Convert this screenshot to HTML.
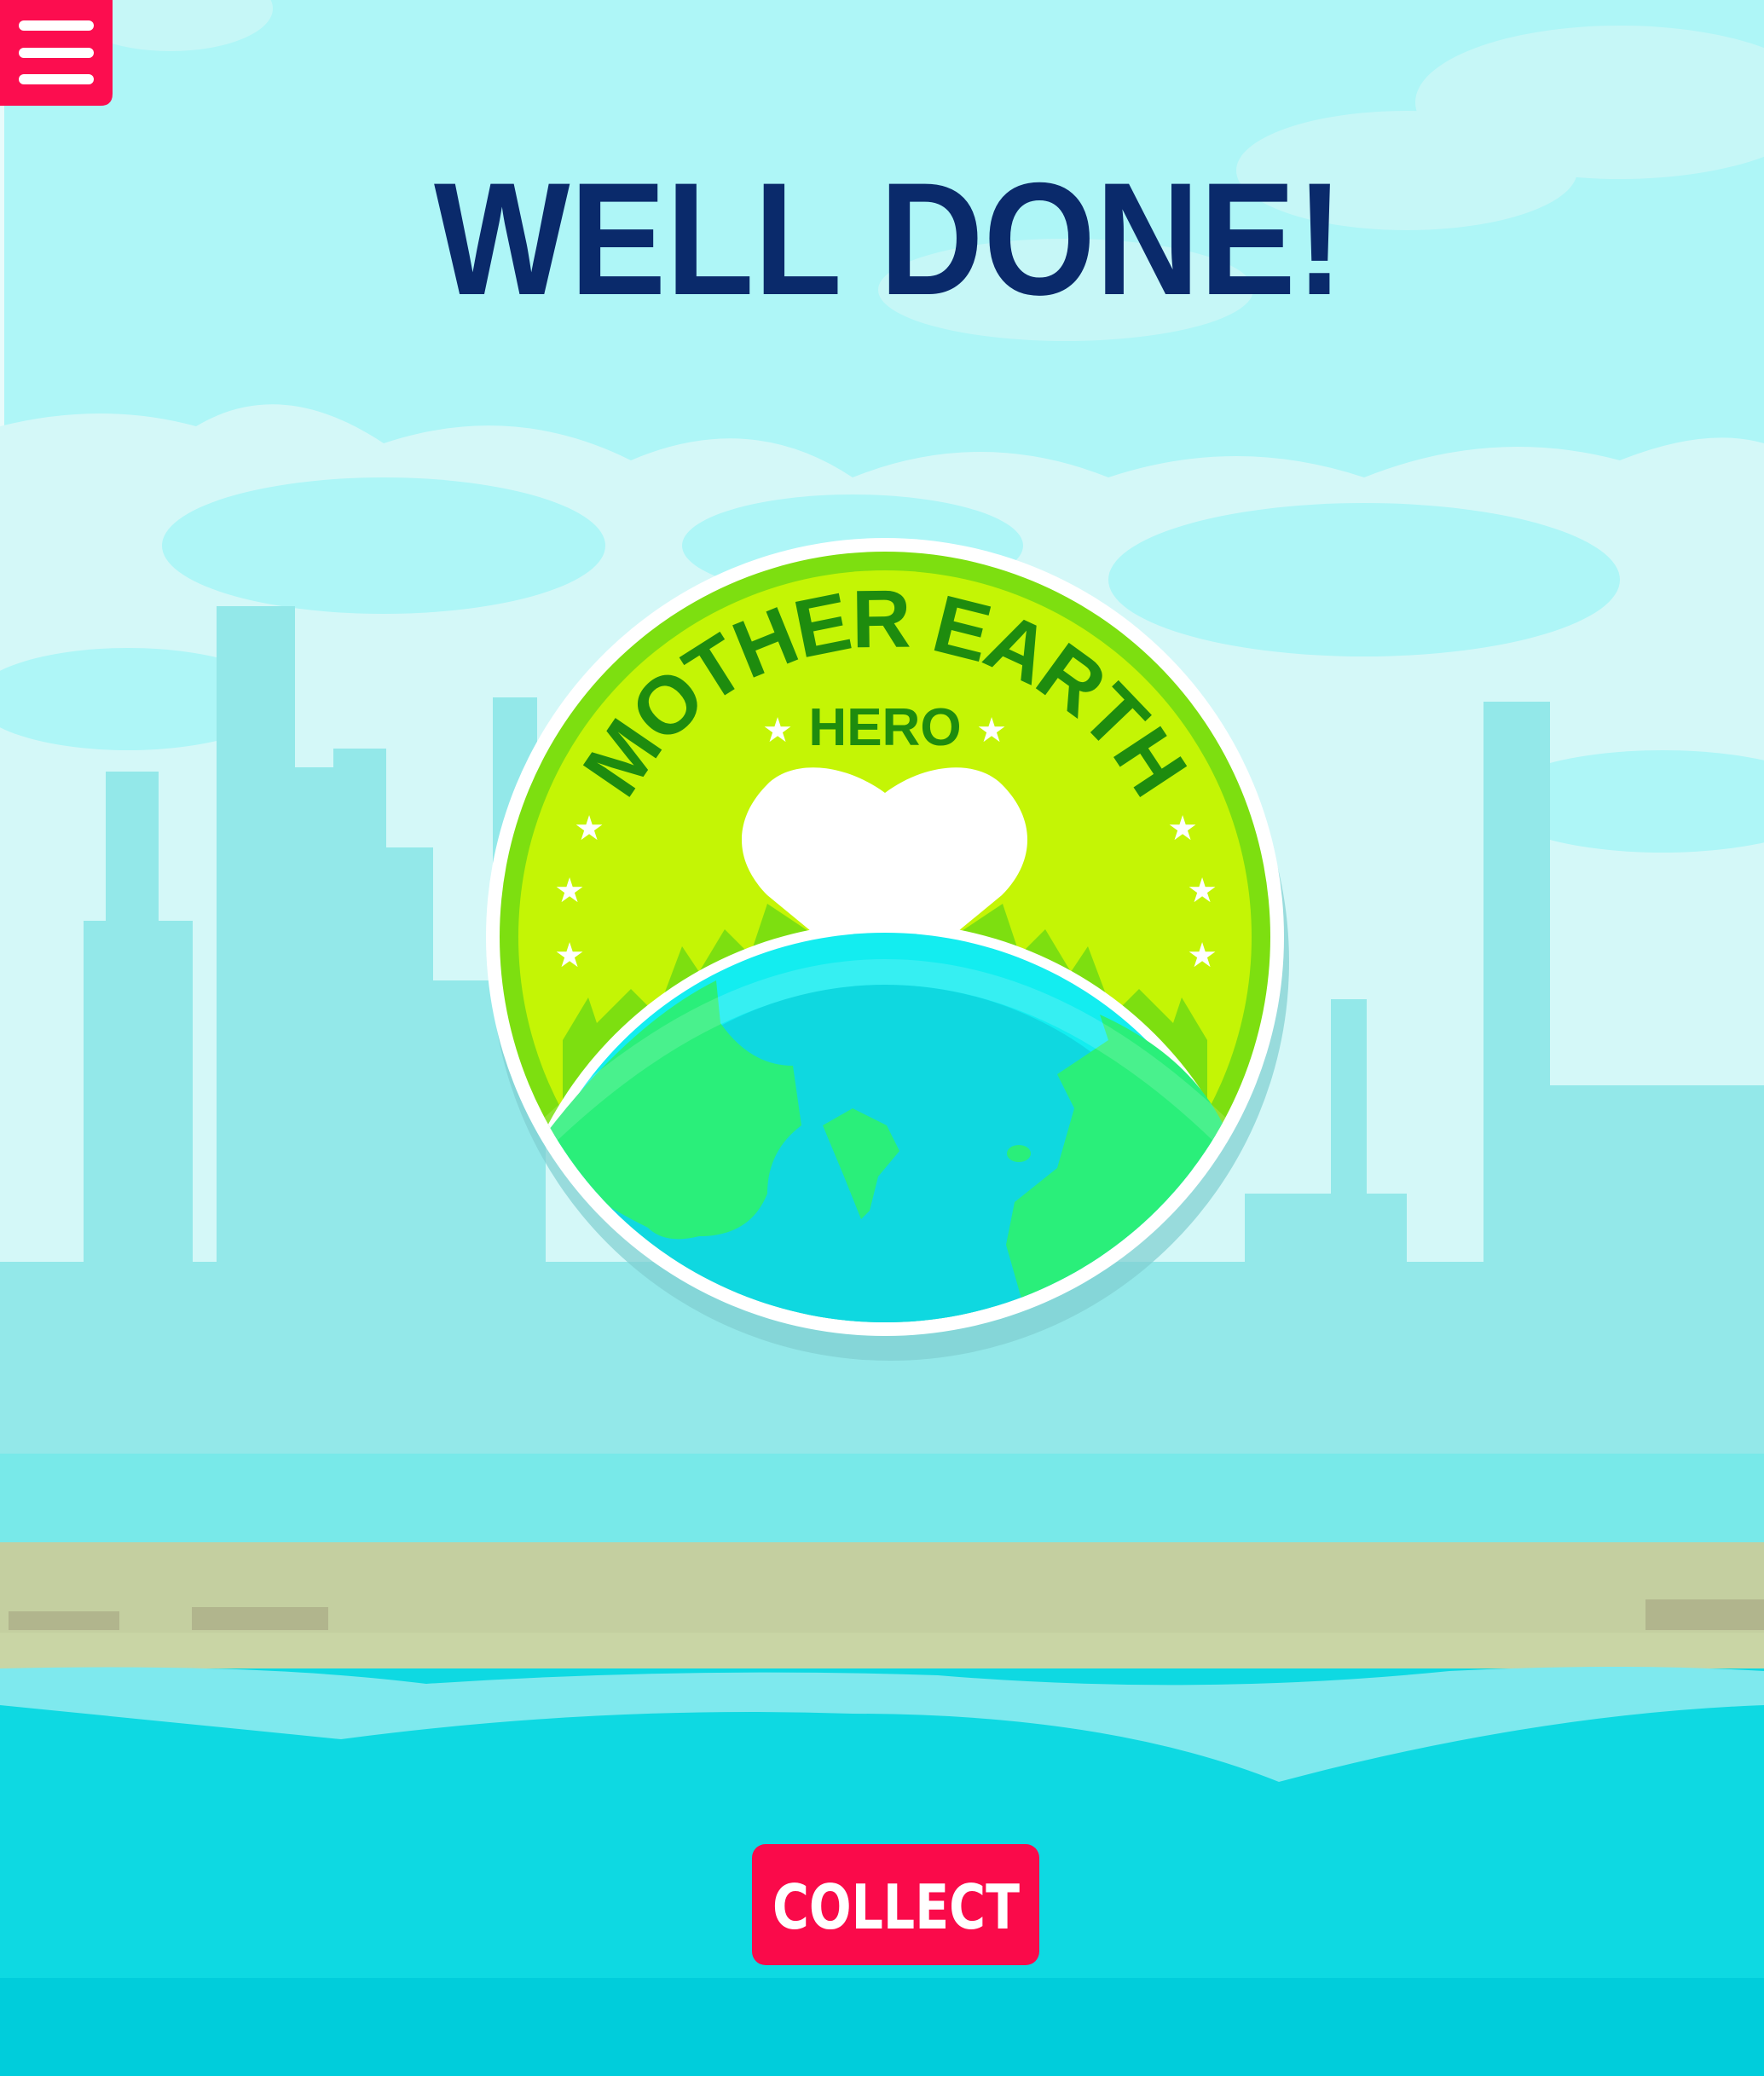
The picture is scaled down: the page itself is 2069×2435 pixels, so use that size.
<!DOCTYPE html>
<html><head><meta charset="utf-8"><style>
html,body{margin:0;padding:0;width:2069px;height:2435px;overflow:hidden;background:#aef6f7}
svg{display:block}
</style></head><body>
<svg width="2069" height="2435" viewBox="0 0 2069 2435" xmlns="http://www.w3.org/2000/svg">
<defs>
<clipPath id="badge"><circle cx="1038" cy="1099" r="425"/></clipPath>
<clipPath id="badge2"><circle cx="1038" cy="1099" r="452"/></clipPath>
<path id="arc" d="M 698 1099 A 340 340 0 0 1 1378 1099" fill="none"/>
</defs>
<rect width="2069" height="2435" fill="#aef6f7"/>
<rect x="0" y="0" width="5" height="2435" fill="#e8fbfb"/>
<g fill="#c6f7f7">
<ellipse cx="200" cy="10" rx="120" ry="50"/>
<ellipse cx="1900" cy="120" rx="240" ry="90"/>
<ellipse cx="1650" cy="200" rx="200" ry="70"/>
<ellipse cx="1250" cy="340" rx="220" ry="60"/>
</g>
<path d="M0 500 Q120 470 230 500 Q330 440 450 520 Q600 470 740 540 Q880 480 1000 560 Q1150 500 1300 560 Q1450 510 1600 560 Q1750 500 1900 540 Q2000 500 2069 520 L2069 1500 L0 1500 Z" fill="#d4f8f8"/>
<g fill="#aef6f7">
<ellipse cx="450" cy="640" rx="260" ry="80"/>
<ellipse cx="1600" cy="680" rx="300" ry="90"/>
<ellipse cx="1000" cy="640" rx="200" ry="60"/>
<ellipse cx="150" cy="820" rx="180" ry="60"/>
<ellipse cx="1950" cy="940" rx="200" ry="60"/>
</g>
<g fill="#93e8e9">
<rect x="254" y="711" width="92" height="1000"/>
<rect x="124" y="905" width="62" height="1000"/>
<rect x="98" y="1080" width="30" height="700"/>
<rect x="186" y="1080" width="40" height="700"/>
<rect x="346" y="900" width="45" height="900"/>
<rect x="391" y="878" width="62" height="900"/>
<rect x="453" y="994" width="55" height="900"/>
<rect x="578" y="818" width="52" height="900"/>
<rect x="0" y="1480" width="2069" height="300"/>
<rect x="1740" y="823" width="78" height="900"/>
<rect x="1818" y="1273" width="251" height="500"/>
<rect x="1561" y="1172" width="42" height="600"/>
<rect x="1460" y="1400" width="190" height="400"/>
<rect x="500" y="1150" width="140" height="650"/>
</g>
<rect x="0" y="1705" width="2069" height="105" fill="#78e9e9"/>
<rect x="0" y="1809" width="2069" height="150" fill="#c4cfa0"/>
<rect x="0" y="1915" width="2069" height="45" fill="#c9d5a5"/>
<g fill="#b1b58d"><rect x="10" y="1890" width="130" height="22"/><rect x="225" y="1885" width="160" height="27"/><rect x="1930" y="1876" width="139" height="36"/></g>
<rect x="0" y="1957" width="2069" height="478" fill="#0ed9e2"/>
<path d="M0 1957 Q300 1950 500 1975 Q800 1955 1100 1965 Q1400 1990 1700 1960 Q1900 1950 2069 1960 L2069 2000 Q1800 2010 1500 2090 Q1300 2010 1000 2010 Q700 2000 400 2040 Q200 2020 0 2000 Z" fill="#7ee9ee"/>
<rect x="0" y="2320" width="2069" height="115" fill="#00cddb"/>
<circle cx="1044" cy="1128" r="468" fill="#7fcfd0" opacity="0.7"/>
<circle cx="1038" cy="1099" r="468" fill="#ffffff"/>
<circle cx="1038" cy="1099" r="452" fill="#7ddf10"/>
<circle cx="1038" cy="1099" r="430" fill="#c4f505"/>
<g fill="#7ddf10" clip-path="url(#badge)">
<path d="M660 1220 L690 1170 L700 1200 L740 1160 L770 1190 L800 1110 L820 1140 L850 1090 L880 1120 L900 1060 L960 1100 L1038 1090 L1116 1100 L1176 1060 L1196 1120 L1226 1090 L1256 1140 L1276 1110 L1306 1190 L1336 1160 L1376 1200 L1386 1170 L1416 1220 L1416 1400 L660 1400 Z"/>
</g>
<path d="M1038 930 C990 895 930 890 900 920 C860 960 860 1010 900 1050 L985 1120 L1090 1120 L1175 1050 C1215 1010 1215 960 1175 920 C1145 890 1085 895 1038 930 Z" fill="#ffffff"/>
<g clip-path="url(#badge2)">
<circle cx="1038" cy="1530" r="448" fill="#ffffff"/>
<circle cx="1038" cy="1530" r="436" fill="#13edf0"/>
<circle cx="1038" cy="1565" r="410" fill="#0fd8e0"/>
<path d="M640 1330 Q740 1200 840 1150 L845 1200 Q880 1250 930 1250 L940 1320 Q900 1350 900 1400 Q880 1450 820 1450 Q780 1460 760 1440 Q720 1420 690 1400 Z" fill="#2aef7a"/>
<path d="M965 1320 L1000 1300 L1040 1320 L1055 1350 L1030 1380 L1020 1420 L1010 1430 L990 1380 Z" fill="#2aef7a"/>
<path d="M1290 1190 Q1400 1240 1440 1330 Q1380 1420 1300 1500 L1200 1530 L1180 1460 L1190 1410 L1240 1370 L1260 1300 L1240 1260 L1300 1220 Z" fill="#2aef7a"/>
<ellipse cx="1195" cy="1353" rx="14" ry="10" fill="#2aef7a"/>
<path d="M640 1330 Q840 1140 1038 1140 Q1240 1140 1436 1330" fill="none" stroke="#ffffff" stroke-opacity="0.15" stroke-width="30"/>
</g>
<text font-family="Liberation Sans, sans-serif" font-weight="bold" font-size="96" fill="#1e8c0e"><textPath href="#arc" startOffset="50%" text-anchor="middle" textLength="740" lengthAdjust="spacing">MOTHER EARTH</textPath></text>
<text x="1038" y="874" text-anchor="middle" font-family="Liberation Sans, sans-serif" font-weight="bold" font-size="62" fill="#1e8c0e">HERO</text>
<g fill="#ffffff" font-family="DejaVu Sans, sans-serif" font-size="40" text-anchor="middle">
<text x="912" y="870">★</text><text x="1163" y="870">★</text>
<text x="691" y="985">★</text><text x="668" y="1058">★</text><text x="668" y="1134">★</text>
<text x="1387" y="985">★</text><text x="1410" y="1058">★</text><text x="1410" y="1134">★</text>
</g>
<text x="509" y="345" textLength="1067" lengthAdjust="spacingAndGlyphs" font-family="Liberation Sans, sans-serif" font-weight="bold" font-size="188" fill="#0a2a6b">WELL DONE!</text>
<path d="M0 0 H132 V110 Q132 124 118 124 H0 Z" fill="#fc0d4f"/>
<g stroke="#ffffff" stroke-width="12" stroke-linecap="round">
<line x1="28" y1="30" x2="104" y2="30"/><line x1="28" y1="62" x2="104" y2="62"/><line x1="28" y1="93" x2="104" y2="93"/>
</g>
<rect x="882" y="2163" width="337" height="142" rx="16" fill="#fa0a4a"/>
<text x="906" y="2262" textLength="290" lengthAdjust="spacingAndGlyphs" font-family="DejaVu Sans Condensed, DejaVu Sans, sans-serif" font-weight="bold" font-size="72" fill="#ffffff">COLLECT</text>
</svg>
</body></html>
